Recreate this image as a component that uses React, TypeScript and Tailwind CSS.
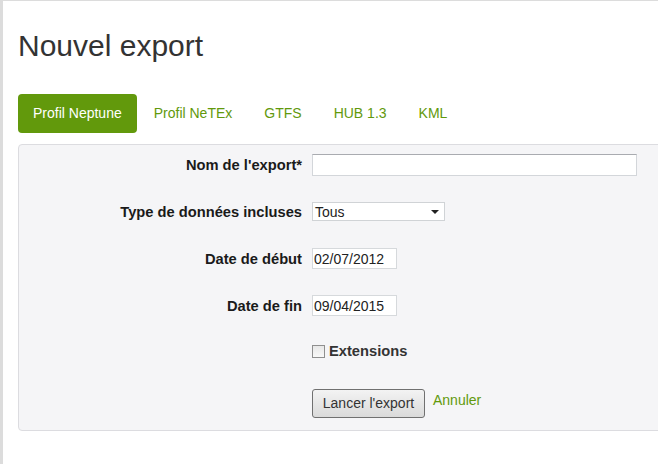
const tabs = ["Profil Neptune", "Profil NeTEx", "GTFS", "HUB 1.3", "KML"]

function Row({ label, children, className }: { label?: string; children: React.ReactNode; className?: string }) {
  return (
    <div className={"flex items-center " + (className ?? "")}>
      <div className="w-[283px] shrink-0 text-right text-[14.7px] leading-[16px] font-bold text-[#1a1a1a]">{label}</div>
      <div className="ml-[10px] flex items-center">{children}</div>
    </div>
  )
}

export default function App() {
  return (
    <div
      className="h-[464px] w-full overflow-hidden border-t border-l-[3px] border-[#dcdcdc] bg-white text-[#333]"
      style={{ fontFamily: '"Liberation Sans", Arial, sans-serif' }}
    >
      <div className="pl-[15px] pt-[28px]">
        <h1 className="text-[30px] leading-[33px] font-normal text-[#333]">Nouvel export</h1>

        <div className="mt-[32px] flex">
          {tabs.map((t, i) => (
            <div
              key={t}
              className={
                "mr-[2px] flex h-[39px] items-center rounded-[4px] px-[15px] text-[14px] " +
                (i === 0 ? "bg-[#62990c] text-white" : "text-[#62990c]")
              }
            >
              {t}
            </div>
          ))}
        </div>

        <div className="mt-[11px] w-[700px] rounded-[4px] border border-[#dcdce0] bg-[#f5f5f7] pt-[9px] pb-[12px]">
          <Row label="Nom de l'export*">
            <input
              className="h-[22px] w-[325px] border border-[#d3d6da] border-t-[#a9abb0] bg-white px-1 text-[14px] outline-none"
              defaultValue=""
            />
          </Row>

          <Row label="Type de données incluses" className="mt-[26px]">
            <div className="flex h-[19px] w-[133px] items-center justify-between border border-[#d0d3d6] bg-white pr-[5px] pl-[2px] text-[14px] leading-[16px] text-[#222]">
              <span>Tous</span>
              <svg width="8" height="4" viewBox="0 0 8 4">
                <path d="M0 0h8L4 4z" fill="#222" />
              </svg>
            </div>
          </Row>

          <Row label="Date de début" className="mt-[27px]">
            <div className="flex h-[21px] w-[85px] items-center border border-[#d6d9dc] bg-white pl-[1px] text-[14px] leading-[16px] text-[#222]">
              02/07/2012
            </div>
          </Row>

          <Row label="Date de fin" className="mt-[26px]">
            <div className="flex h-[21px] w-[85px] items-center border border-[#d6d9dc] bg-white pl-[1px] text-[14px] leading-[16px] text-[#222]">
              09/04/2015
            </div>
          </Row>

          <Row className="mt-[27px]">
            <span className="h-[13px] w-[13px] border border-[#8f8f8f] bg-gradient-to-b from-[#e8e8e8] to-[#f8f8f8]" />
            <span className="ml-[4px] text-[14.7px] leading-[16px] font-bold text-[#333]">Extensions</span>
          </Row>

          <div className="mt-[30px] flex items-start">
            <div className="w-[283px] shrink-0" />
            <button className="ml-[10px] h-[29px] w-[113px] rounded-[3px] border border-[#707070] bg-gradient-to-b from-[#f3f3f3] to-[#dadada] text-[14px] text-[#333]">
              Lancer l'export
            </button>
            <a className="ml-[8px] mt-[3px] text-[14px] leading-[16px] text-[#62990c]">Annuler</a>
          </div>
        </div>
      </div>
    </div>
  )
}
